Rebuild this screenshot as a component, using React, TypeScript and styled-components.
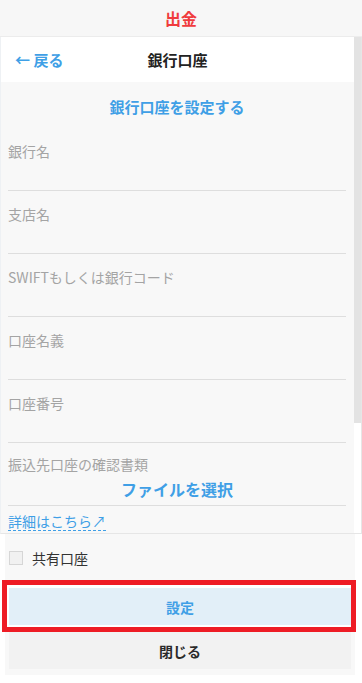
import React, { useState } from 'react';
import styled, { createGlobalStyle } from 'styled-components';

const GlobalStyle = createGlobalStyle`
  html, body {
    margin: 0;
    padding: 0;
    background: #ffffff;
    font-family: "Noto Sans CJK JP", "Noto Sans", sans-serif;
  }
  * {
    box-sizing: border-box;
  }
`;

const BLUE = '#3f9fe6';

const Page = styled.div`
  width: 362px;
  height: 683px;
  display: flex;
  flex-direction: column;
  background: #ffffff;
`;

const TopBar = styled.div`
  height: 37px;
  flex: 0 0 37px;
  display: flex;
  align-items: center;
  justify-content: center;
  background: #f7f7f7;
  border-bottom: 1px solid #ececec;
  color: #f03b3d;
  font-size: 16px;
  font-weight: 700;
`;

// scroll area: viewport + a drawn rail (headless chrome hides overlay scrollbars)
const ScrollFrame = styled.div`
  height: 497px;
  flex: 0 0 497px;
  display: flex;
  border-left: 1px solid #eef1f4;
  border-bottom: 1px solid #e6e6e6;
  border-right: 1px solid #e6e6e6;
`;

const Viewport = styled.div`
  flex: 1;
  overflow: hidden;
  background: #f8f8f8;
`;

const Rail = styled.div`
  width: 7px;
  flex: 0 0 7px;
  background: #ffffff;
`;

const Thumb = styled.div`
  height: 386px;
  background: #e3e3e3;
`;

const Nav = styled.div`
  height: 45px;
  display: grid;
  grid-template-columns: 1fr auto 1fr;
  align-items: center;
  background: #ffffff;
  padding: 0 14px;
`;

const BackLink = styled.a`
  color: ${BLUE};
  font-size: 15px;
  font-weight: 700;
  text-decoration: none;
  cursor: pointer;
`;

const NavTitle = styled.div`
  font-size: 15px;
  font-weight: 700;
  color: #222222;
`;

const Form = styled.div`
  padding: 0 8px 0 7px;
`;

const SectionTitle = styled.div`
  padding: 16px 0 12px;
  line-height: 18px;
  text-align: center;
  color: ${BLUE};
  font-size: 15px;
  font-weight: 700;
`;

const Field = styled.label<{ $top?: number }>`
  display: flex;
  flex-direction: column;
  padding-top: ${(p) => p.$top ?? 14}px;
  border-bottom: 1px solid #dedede;
`;

const FieldLabel = styled.span`
  line-height: 18px;
  font-size: 14px;
  color: #a4a4a4;
`;

const TextInput = styled.input`
  height: 30px;
  border: none;
  background: transparent;
  outline: none;
  font-size: 14px;
  padding: 0;
`;

const FileButton = styled.button`
  height: 32px;
  border: none;
  background: transparent;
  color: ${BLUE};
  font-family: inherit;
  font-size: 16px;
  font-weight: 700;
  cursor: pointer;
`;

const DetailLink = styled.a`
  display: inline-block;
  margin-top: 6px;
  line-height: 18px;
  color: ${BLUE};
  font-size: 14px;
  text-decoration: none;
  border-bottom: 1px dashed ${BLUE};
`;

const Footer = styled.div`
  margin: 0 7px 0 5px;
  padding: 17px 4px 6px;
  background: #f8f8f8;
  display: flex;
  flex-direction: column;
`;

const CheckRow = styled.label`
  display: flex;
  align-items: center;
  gap: 9px;
  height: 14px;
  margin-bottom: 15px;
  font-size: 14px;
  color: #333333;
`;

const Box = styled.span<{ $checked: boolean }>`
  width: 14px;
  height: 14px;
  border: 1px solid #d6d6d6;
  background: ${(p) => (p.$checked ? BLUE : '#f1f1f1')};
`;

const Highlight = styled.div`
  margin: 0 -5px 0 -7px;
  padding: 3px 0 2px 2px;
  border: 5px solid #ee1c25;
  background: #ffffff;
`;

const ActionButton = styled.button<{ $primary?: boolean }>`
  display: block;
  width: 100%;
  height: 37px;
  border: none;
  font-family: inherit;
  font-size: 14px;
  font-weight: 700;
  cursor: pointer;
  background: ${(p) => (p.$primary ? '#e2eff8' : '#f2f2f2')};
  color: ${(p) => (p.$primary ? BLUE : '#2a2a2a')};
`;

const fields = ['銀行名', '支店名', 'SWIFTもしくは銀行コード', '口座名義', '口座番号'];

export default function App() {
  const [shared, setShared] = useState(false);

  return (
    <Page>
      <GlobalStyle />
      <TopBar>出金</TopBar>
      <ScrollFrame>
        <Viewport>
          <Nav>
            <BackLink>← 戻る</BackLink>
            <NavTitle>銀行口座</NavTitle>
            <span />
          </Nav>
          <Form>
            <SectionTitle>銀行口座を設定する</SectionTitle>
            {fields.map((f) => (
              <Field key={f}>
                <FieldLabel>{f}</FieldLabel>
                <TextInput />
              </Field>
            ))}
            <Field $top={12}>
              <FieldLabel>振込先口座の確認書類</FieldLabel>
              <FileButton>ファイルを選択</FileButton>
            </Field>
            <DetailLink>詳細はこちら↗</DetailLink>
          </Form>
        </Viewport>
        <Rail>
          <Thumb />
        </Rail>
      </ScrollFrame>
      <Footer>
        <CheckRow onClick={() => setShared(!shared)}>
          <Box $checked={shared} />
          共有口座
        </CheckRow>
        <Highlight>
          <ActionButton $primary>設定</ActionButton>
        </Highlight>
        <ActionButton>閉じる</ActionButton>
      </Footer>
    </Page>
  );
}
